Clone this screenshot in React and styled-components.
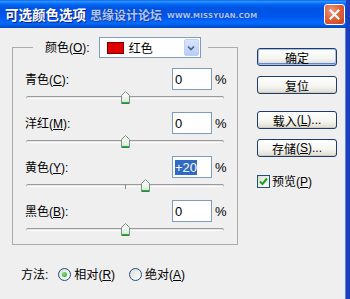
import React from 'react';
import styled, { createGlobalStyle } from 'styled-components';

const GlobalStyle = createGlobalStyle`
  html, body { margin: 0; padding: 0; }
  body {
    background: #efefef;
    font-family: Tahoma, "Liberation Sans", "Noto Sans CJK SC", sans-serif;
    font-size: 12px;
    color: #000;
  }
`;

const Window = styled.div`
  width: 350px;
  height: 299px;
  box-sizing: border-box;
  border-right: 4px solid #1a3fbf;
  box-shadow: inset -1px 0 0 #5f86e6;
  background: #efefef;
  display: flex;
  flex-direction: column;
  overflow: hidden;
`;

const TitleBar = styled.div`
  height: 28px;
  flex: 0 0 28px;
  display: flex;
  align-items: center;
  padding: 0 1px 0 5px;
  background: linear-gradient(#0058ee 0%, #3593ff 4%, #288eff 7%, #127dff 10%, #036ffc 14%, #0262ee 18%, #0057e5 24%, #0054e3 30%, #0055eb 56%, #005bf5 66%, #026afe 78%, #0062ef 88%, #0052d6 94%, #0048c0 100%);
`;

const Title = styled.span`
  font-family: "Noto Sans CJK SC", sans-serif;
  font-weight: 700;
  font-size: 13.5px;
  color: #fff;
  text-shadow: 1px 1px 0 #0a1e8a;
`;

const Mark = styled.span`
  font-family: "Noto Sans CJK SC", sans-serif;
  font-weight: 700;
  font-size: 12px;
  margin-left: 4px;
  color: #a9c9ff;
  text-shadow: 0 0 1px #0a2a9a, 1px 1px 0 #1b3fa8;
`;

const Url = styled.span`
  font-family: "DejaVu Sans", sans-serif;
  font-weight: 700;
  font-size: 7px;
  letter-spacing: 0.2px;
  margin: 3px 0 0 5px;
  color: #a9c9ff;
  text-shadow: 0 0 1px #0a2a9a;
`;

const Close = styled.div`
  margin-left: auto;
  width: 21px;
  height: 21px;
  box-sizing: border-box;
  border: 1px solid #fff;
  border-radius: 3px;
  background: radial-gradient(circle at 35% 30%, #f09a7c 0%, #e2623d 45%, #c8421c 100%);
  display: flex;
  align-items: center;
  justify-content: center;
`;

const Body = styled.div`
  flex: 0 0 auto;
  display: flex;
  align-items: flex-start;
  padding: 9px 0 0 12px;
`;

const LeftCol = styled.div`
  flex: 0 0 226px;
  display: flex;
  flex-direction: column;
`;

const Group = styled.fieldset`
  flex: 0 0 auto;
  margin: 0;
  width: 226px;
  box-sizing: border-box;
  min-width: 0;
  padding: 10px 10px 0 12px;
  border: 1px solid #acacac;
`;

const Legend = styled.legend`
  margin-left: 8px;
  padding: 0 7px 0 12px;
`;

const LegendInner = styled.div`
  display: flex;
  align-items: center;
  gap: 9px;
`;

const Label = styled.span`
  font-family: "Noto Sans CJK SC", sans-serif;
  font-size: 12px;
  line-height: 16px;
  white-space: nowrap;
  u, .l { font-family: Tahoma, "Liberation Sans", sans-serif; }
`;

const Select = styled.div`
  width: 102px;
  height: 21px;
  box-sizing: border-box;
  border: 1px solid #7f9db9;
  background: #fff;
  display: flex;
  align-items: center;
  padding-left: 7px;
`;

const Swatch = styled.span`
  width: 15px;
  height: 10px;
  background: ${p => p.color};
  border: 1px solid #7a0000;
  margin-right: 5px;
`;

const Arrow = styled.div`
  margin-left: auto;
  width: 15px;
  height: 17px;
  margin-right: 1px;
  border-radius: 2px;
  background: linear-gradient(#d9e5fd, #b8cdf8);
  border: 1px solid #bcd0f8;
  box-sizing: border-box;
  display: flex;
  align-items: center;
  justify-content: center;
`;

const Channel = styled.div`
  height: 44px;
  flex: 0 0 44px;
`;

const Row = styled.div`
  display: grid;
  grid-template-columns: 1fr 40px 12px;
  column-gap: 3px;
  align-items: center;
  height: 22px;
`;

const Field = styled.div`
  height: 22px;
  box-sizing: border-box;
  border: 1px solid #7f9db9;
  background: #fff;
  padding-left: 2px;
  display: flex;
  align-items: center;
  font-family: Tahoma, "Liberation Sans", sans-serif;
  font-size: 13px;
`;

const Selected = styled.span`
  background: #316ac5;
  color: #fff;
  line-height: 15px;
`;

const Pct = styled.span`
  font-family: Tahoma, "Liberation Sans", sans-serif;
  font-size: 13px;
`;

const Slider = styled.div`
  position: relative;
  height: 13px;
  margin: 1px 3px 0 1px;
  display: flex;
  align-items: center;
`;

const Track = styled.div`
  flex: 1;
  height: 3px;
  box-sizing: border-box;
  border: 1px solid #b4b4b4;
  border-top-color: #9a9a9a;
  border-bottom-color: #ffffff;
  border-radius: 2px;
  background: #e6e6e6;
`;

const Tick = styled.div`
  position: absolute;
  left: 50%;
  top: 5px;
  width: 1px;
  height: 5px;
  background: #8f8f8f;
`;

const Thumb = styled.svg`
  position: absolute;
  top: 0;
  margin-left: -4px;
`;

const Method = styled.div`
  display: flex;
  align-items: center;
  margin-top: 21px;
  padding-left: 9px;
  height: 16px;
`;

const Radio = styled.span`
  width: 13px;
  height: 13px;
  box-sizing: border-box;
  border-radius: 50%;
  border: 1px solid #1c5180;
  background: linear-gradient(135deg, #dcdcd6, #fff);
  display: flex;
  align-items: center;
  justify-content: center;
  margin: 0 3px 0 ${p => p.gap}px;
`;

const Dot = styled.span`
  width: 5px;
  height: 5px;
  border-radius: 50%;
  background: radial-gradient(circle at 40% 35%, #7ee27e, #21a121);
`;

const RightCol = styled.div`
  flex: 0 0 80px;
  margin: 11px 0 0 19px;
  display: flex;
  flex-direction: column;
`;

const Button = styled.div`
  height: 18px;
  box-sizing: border-box;
  margin-top: ${p => p.top}px;
  border: 1px solid #1f3b66;
  border-radius: 3px;
  background: linear-gradient(#ffffff, #f4f4f0 60%, #dedad0);
  box-shadow: ${p => (p.primary ? 'inset 0 0 0 1px #a8c2f0, inset 0 -1px 0 1px #5d86d6' : 'inset 0 -1px 0 #d0ccc0')};
  display: flex;
  align-items: center;
  justify-content: center;
  font-family: "Noto Sans CJK SC", sans-serif;
  font-size: 12px;
  u, .l { font-family: Tahoma, "Liberation Sans", sans-serif; }
`;

const Check = styled.div`
  display: flex;
  align-items: center;
  margin-top: 16px;
`;

const Box = styled.span`
  width: 13px;
  height: 13px;
  box-sizing: border-box;
  border: 1px solid #1c5180;
  background: linear-gradient(135deg, #dcdcd6, #fff);
  margin-right: 2px;
  display: flex;
  align-items: center;
  justify-content: center;
`;

const channels = [
  { name: '青色', key: 'C', value: 0 },
  { name: '洋红', key: 'M', value: 0 },
  { name: '黄色', key: 'Y', value: 20, selected: true },
  { name: '黑色', key: 'B', value: 0 },
];

const SliderThumb = ({ value }) => (
  <Thumb width="9" height="13" viewBox="0 0 9 13" style={{ left: `${50 + value / 2}%` }}>
    <defs>
      <linearGradient id="tg" x1="0" y1="0" x2="0" y2="1">
        <stop offset="0" stopColor="#ffffff" />
        <stop offset="0.7" stopColor="#e4f2e4" />
        <stop offset="1" stopColor="#b9dcb9" />
      </linearGradient>
    </defs>
    <polygon points="0.5,4.5 4.5,0.5 8.5,4.5 8.5,12.5 0.5,12.5" fill="url(#tg)" stroke="#7d8f88" />
    <line x1="1" y1="11.5" x2="8" y2="11.5" stroke="#37a64a" />
    <line x1="1" y1="12.5" x2="8" y2="12.5" stroke="#2a8a3a" />
  </Thumb>
);

const Key = ({ k }) => (
  <span className="l">(<u>{k}</u>)</span>
);

export default function App() {
  return (
    <>
      <GlobalStyle />
      <Window>
        <TitleBar>
          <Title>可选颜色选项</Title>
          <Mark>思缘设计论坛</Mark>
          <Url>WWW.MISSYUAN.COM</Url>
          <Close>
            <svg width="11" height="11" viewBox="0 0 11 11">
              <path d="M1.5 1.5 L9.5 9.5 M9.5 1.5 L1.5 9.5" stroke="#fff" strokeWidth="2.2" strokeLinecap="square" />
            </svg>
          </Close>
        </TitleBar>
        <Body>
          <LeftCol>
            <Group>
              <Legend>
                <LegendInner>
                  <Label>颜色<Key k="O" /><span className="l">:</span></Label>
                  <Select>
                    <Swatch color="#e00000" />
                    <Label>红色</Label>
                    <Arrow>
                      <svg width="8" height="6" viewBox="0 0 8 6">
                        <path d="M1 1.5 L4 4.5 L7 1.5" stroke="#4d6185" strokeWidth="1.6" fill="none" />
                      </svg>
                    </Arrow>
                  </Select>
                </LegendInner>
              </Legend>
              {channels.map(c => (
                <Channel key={c.key}>
                  <Row>
                    <Label>{c.name}<Key k={c.key} /><span className="l">:</span></Label>
                    <Field>
                      {c.selected ? <Selected>+{c.value}</Selected> : c.value}
                    </Field>
                    <Pct>%</Pct>
                  </Row>
                  <Slider>
                    <Track />
                    <Tick />
                    <SliderThumb value={c.value} />
                  </Slider>
                </Channel>
              ))}
            </Group>
            <Method>
              <Label>方法<span className="l">:</span></Label>
              <Radio gap={10}><Dot /></Radio>
              <Label>相对<Key k="R" /></Label>
              <Radio gap={14} />
              <Label>绝对<Key k="A" /></Label>
            </Method>
          </LeftCol>
          <RightCol>
            <Button primary top={0}>确定</Button>
            <Button top={10}>复位</Button>
            <Button top={17}>载入<Key k="L" /><span className="l">...</span></Button>
            <Button top={10}>存储<Key k="S" /><span className="l">...</span></Button>
            <Check>
              <Box>
                <svg width="9" height="9" viewBox="0 0 9 9">
                  <path d="M1 4.5 L3.5 7 L8 1.5" stroke="#21a121" strokeWidth="2" fill="none" />
                </svg>
              </Box>
              <Label>预览<Key k="P" /></Label>
            </Check>
          </RightCol>
        </Body>
      </Window>
    </>
  );
}
